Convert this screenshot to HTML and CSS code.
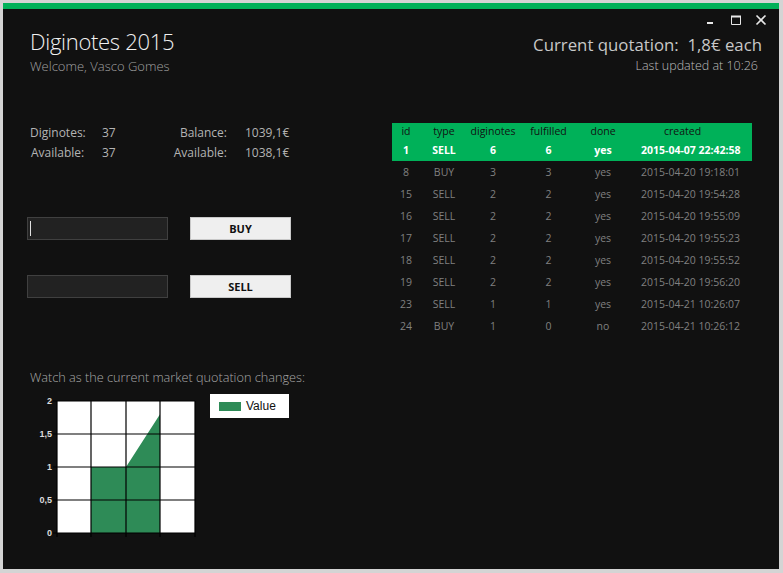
FILE: index.html
```html
<!DOCTYPE html>
<html>
<head>
<meta charset="utf-8">
<link rel="stylesheet" href="styles.css">
</head>
<body>
<div class="window">
  <div class="titlebar">
    <svg class="ctl" width="12" height="12" viewBox="0 0 12 12"><rect x="2" y="8" width="6" height="2" fill="#e8e8e8"/></svg>
    <svg class="ctl" width="12" height="12" viewBox="0 0 12 12"><path d="M1.5 2.5 H10.5 V10.5 H1.5 Z" fill="none" stroke="#e8e8e8" stroke-width="1"/><rect x="1" y="1.5" width="10" height="2" fill="#e8e8e8"/></svg>
    <svg class="ctl" width="12" height="12" viewBox="0 0 12 12"><path d="M1.5 1.5 L10.5 10.5 M10.5 1.5 L1.5 10.5" stroke="#e8e8e8" stroke-width="1.6"/></svg>
  </div>
  <header class="header">
    <div class="brand">
      <div class="title">Diginotes 2015</div>
      <div class="welcome">Welcome, Vasco Gomes</div>
    </div>
    <div class="quote">
      <div class="quote-main">Current quotation:  1,8€ each</div>
      <div class="quote-updated">Last updated at 10:26</div>
    </div>
  </header>
  <main class="main">
    <section class="left">
      <div class="stats">
        <span>Diginotes:</span><span>37</span><span class="r">Balance:</span><span class="v">1039,1€</span>
        <span class="a">Available:</span><span>37</span><span class="r">Available:</span><span class="v">1038,1€</span>
      </div>
      <div class="trade">
        <div class="field"><span class="caret"></span></div>
        <button class="btn">BUY</button>
      </div>
      <div class="trade">
        <div class="field"></div>
        <button class="btn">SELL</button>
      </div>
      <div class="chart-label">Watch as the current market quotation changes:</div>
      <div class="chart">
        <svg width="170" height="150" viewBox="0 0 170 150">
          <rect x="27" y="7" width="138" height="132" fill="#ffffff"/>
          <path d="M61 139 V73 H96 L130 20.2 V139 Z" fill="#2e8b57"/>
          <g stroke="#000" stroke-width="1.2" fill="none">
            <path d="M61 7 V143 M96 7 V143 M130 7 V143 M165 7 V143 M27 7 V143"/>
            <path d="M23 7 H165 M23 40 H165 M23 73 H165 M23 106 H165 M23 139 H165"/>
          </g>
          <g class="ylab" text-anchor="end">
            <text x="22" y="10">2</text>
            <text x="22" y="43">1,5</text>
            <text x="22" y="76">1</text>
            <text x="22" y="109">0,5</text>
            <text x="22" y="142">0</text>
          </g>
        </svg>
        <div class="legend"><span class="swatch"></span><span>Value</span></div>
      </div>
    </section>
    <section class="orders">
      <div class="row head">
        <span>id</span><span>type</span><span>diginotes</span><span>fulfilled</span><span>done</span><span class="created">created</span>
      </div>
      <div class="row sel"><span>1</span><span>SELL</span><span>6</span><span>6</span><span>yes</span><span class="created">2015-04-07 22:42:58</span></div>
      <div class="row"><span>8</span><span>BUY</span><span>3</span><span>3</span><span>yes</span><span class="created">2015-04-20 19:18:01</span></div>
      <div class="row"><span>15</span><span>SELL</span><span>2</span><span>2</span><span>yes</span><span class="created">2015-04-20 19:54:28</span></div>
      <div class="row"><span>16</span><span>SELL</span><span>2</span><span>2</span><span>yes</span><span class="created">2015-04-20 19:55:09</span></div>
      <div class="row"><span>17</span><span>SELL</span><span>2</span><span>2</span><span>yes</span><span class="created">2015-04-20 19:55:23</span></div>
      <div class="row"><span>18</span><span>SELL</span><span>2</span><span>2</span><span>yes</span><span class="created">2015-04-20 19:55:52</span></div>
      <div class="row"><span>19</span><span>SELL</span><span>2</span><span>2</span><span>yes</span><span class="created">2015-04-20 19:56:20</span></div>
      <div class="row"><span>23</span><span>SELL</span><span>1</span><span>1</span><span>yes</span><span class="created">2015-04-21 10:26:07</span></div>
      <div class="row"><span>24</span><span>BUY</span><span>1</span><span>0</span><span>no</span><span class="created">2015-04-21 10:26:12</span></div>
    </section>
  </main>
</div>
</body>
</html>
```

FILE: styles.css
```css
* { box-sizing: border-box; }
html, body { margin: 0; }
body {
  background: #d4d4d4;
  padding: 3px 4px 4px 3px;
  font-family: "Open Sans", "Noto Sans", sans-serif;
}
.window {
  width: 776px;
  height: 566px;
  background: #111111;
  border-top: 6px solid #00b159;
}
.titlebar {
  height: 17px;
  display: flex;
  justify-content: flex-end;
  align-items: flex-end;
  gap: 13px;
  padding-right: 12px;
}
.ctl { display: block; }
.header {
  display: flex;
  justify-content: space-between;
  padding: 0 17px 0 27px;
}
.title {
  font-size: 22px;
  letter-spacing: -0.3px;
  font-weight: 300;
  line-height: 30px;
  color: #f2f2f2;
}
.welcome {
  margin-top: 1px;
  font-size: 13px;
  line-height: 18px;
  font-weight: 300;
  color: #a0a0a0;
}
.quote { text-align: right; margin-top: 7px; }
.quote-main {
  font-size: 16.8px;
  line-height: 24px;
  color: #c8c8c8;
  white-space: pre;
}
.quote-updated {
  font-size: 12.5px;
  line-height: 18px;
  color: #bdbdbd;
  padding-right: 4px;
  font-weight: 300;
}
.main {
  display: flex;
  padding-left: 24px;
  margin-top: 48px;
}
.left { width: 365px; }
.stats {
  display: grid;
  grid-template-columns: 72px 58px 67px auto;
  font-size: 12px;
  line-height: 20px;
  color: #b4b4b4;
  padding-left: 3px;
}
.stats .r { text-align: right; }
.stats .v { padding-left: 18px; }
.stats .a { padding-left: 1px; }
.trade {
  display: flex;
  gap: 22px;
  margin-top: 54px;
}
.trade + .trade { margin-top: 35px; }
.field {
  width: 141px;
  height: 23px;
  background: #222222;
  border: 1px solid #404040;
  position: relative;
}
.caret {
  position: absolute;
  left: 2px;
  top: 3px;
  width: 1px;
  height: 15px;
  background: #e0e0e0;
}
.btn {
  width: 101px;
  height: 23px;
  background: #efefef;
  border: 1px solid #c8c8c8;
  font-family: "Open Sans", sans-serif;
  font-size: 11px;
  font-weight: 700;
  color: #111;
  padding: 0;
}
.chart-label {
  margin-top: 70px;
  padding-left: 3px;
  font-size: 12.7px;
  line-height: 18px;
  font-weight: 300;
  color: #a8a8a8;
}
.chart {
  display: flex;
  align-items: flex-start;
  margin-top: 8px;
  padding-left: 3px;
}
.chart svg { display: block; }
.ylab text {
  font-family: "Liberation Sans", sans-serif;
  font-size: 9px;
  font-weight: 700;
  fill: #dcdcdc;
}
.legend {
  margin-left: 10px;
  width: 79px;
  height: 24px;
  background: #ffffff;
  display: flex;
  align-items: center;
  padding-left: 9px;
  gap: 5px;
  font-size: 12px;
  color: #111;
  font-family: "Liberation Sans", sans-serif;
}
.swatch {
  width: 22px;
  height: 9px;
  background: #2e8b57;
}
.orders {
  width: 360px;
  font-size: 10.5px;
  color: #808080;
}
.row {
  display: grid;
  grid-template-columns: 28px 48px 50px 61px 48px 125px;
  height: 22px;
  align-items: center;
  text-align: center;
}
.row .created { text-align: left; padding-left: 14px; }
.row.head {
  height: 16px;
  background: #00b159;
  color: #111;
  align-items: end;
  line-height: 16px;
}
.row.head .created { padding-left: 37px; }
.row.sel {
  background: #00b159;
  color: #ffffff;
  font-weight: 700;
}
```
